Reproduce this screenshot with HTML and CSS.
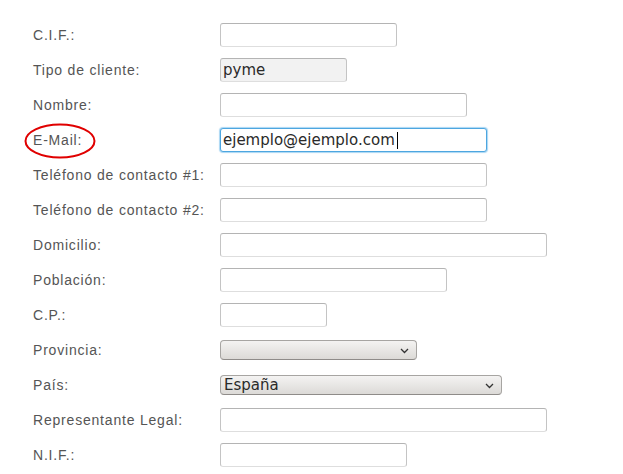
FILE: index.html
```html
<!DOCTYPE html>
<html lang="es">
<head>
    <meta charset="UTF-8">
    <title>Alta de cliente</title>
    <link rel="stylesheet" href="styles.css">
</head>
<body>
    <form class="clientform">
        <label class="lbl" for="cif">C.I.F.:</label>
        <input class="field" id="cif" type="text" style="width: 177px">

        <label class="lbl" for="tipo">Tipo de cliente:</label>
        <input class="field readonly" id="tipo" type="text" value="pyme" readonly style="width: 127px">

        <label class="lbl" for="nombre">Nombre:</label>
        <input class="field" id="nombre" type="text" style="width: 247px">

        <label class="lbl marked" for="email">E-Mail:
            <svg class="mark" width="76" height="38" viewBox="0 0 76 38">
                <ellipse cx="37" cy="19" rx="34.5" ry="16.5" fill="none" stroke="#e00000" stroke-width="2"/>
            </svg>
        </label>
        <span class="caretwrap">
            <input class="field focused" id="email" type="email" value="ejemplo@ejemplo.com" style="width: 267px">
            <span class="caret"></span>
        </span>

        <label class="lbl" for="tel1">Teléfono de contacto #1:</label>
        <input class="field" id="tel1" type="text" style="width: 267px">

        <label class="lbl" for="tel2">Teléfono de contacto #2:</label>
        <input class="field" id="tel2" type="text" style="width: 267px">

        <label class="lbl" for="domicilio">Domicilio:</label>
        <input class="field" id="domicilio" type="text" style="width: 327px">

        <label class="lbl" for="poblacion">Población:</label>
        <input class="field" id="poblacion" type="text" style="width: 227px">

        <label class="lbl" for="cp">C.P.:</label>
        <input class="field" id="cp" type="text" style="width: 107px">

        <label class="lbl" for="provincia">Provincia:</label>
        <span class="selectwrap" style="width: 197px">
            <select class="combo" id="provincia">
                <option value=""></option>
            </select>
            <svg class="chev" width="9" height="6" viewBox="0 0 9 6"><path d="M1 1l3.5 3.5L8 1" fill="none" stroke="#333" stroke-width="1.3"/></svg>
        </span>

        <label class="lbl" for="pais">País:</label>
        <span class="selectwrap" style="width: 282px">
            <select class="combo" id="pais">
                <option value="es">España</option>
            </select>
            <svg class="chev" width="9" height="6" viewBox="0 0 9 6"><path d="M1 1l3.5 3.5L8 1" fill="none" stroke="#333" stroke-width="1.3"/></svg>
        </span>

        <label class="lbl" for="representante">Representante Legal:</label>
        <input class="field" id="representante" type="text" style="width: 327px">

        <label class="lbl" for="nif">N.I.F.:</label>
        <input class="field" id="nif" type="text" style="width: 187px">
    </form>
</body>
</html>
```

FILE: styles.css
```css
body {
    margin: 0;
    background: #fff;
}
.clientform {
    display: grid;
    grid-template-columns: 187px auto;
    grid-auto-rows: 35px;
    align-items: center;
    justify-items: start;
    padding: 17px 0 0 33px;
}
.lbl {
    font-family: "Liberation Sans", Arial, sans-serif;
    font-size: 14px;
    letter-spacing: 0.8px;
    color: #555;
    white-space: nowrap;
}
.marked {
    position: relative;
}
.mark {
    position: absolute;
    left: -10px;
    top: -10px;
}
.field {
    box-sizing: border-box;
    height: 24px;
    margin: 0;
    padding: 0 2px;
    border: 1px solid #c4c4c4;
    border-top-color: #b4b4b4;
    border-bottom-color: #dedede;
    border-radius: 3px;
    background: #fff;
    font-family: "DejaVu Sans", sans-serif;
    font-size: 15px;
    color: #2a2a2a;
    outline: none;
}
.readonly {
    background: #f2f2f2;
}
.focused {
    border: 1px solid #4da6e0;
    box-shadow: 0 0 1px 1px #a9d6f3;
}
.caretwrap {
    position: relative;
    display: inline-block;
    height: 24px;
}
.caret {
    position: absolute;
    left: 177px;
    top: 4px;
    width: 1px;
    height: 17px;
    background: #000;
}
.selectwrap {
    position: relative;
    display: inline-block;
    height: 20px;
}
.combo {
    -webkit-appearance: none;
    appearance: none;
    box-sizing: border-box;
    width: 100%;
    height: 20px;
    margin: 0;
    padding: 0 3px;
    border: 1px solid #a7a5a2;
    border-bottom-color: #8f8c89;
    border-radius: 4px;
    background: linear-gradient(#f4f3f2, #dcdad7);
    font-family: "DejaVu Sans", sans-serif;
    font-size: 15px;
    line-height: 18px;
    color: #2a2a2a;
}
.chev {
    position: absolute;
    right: 8px;
    top: 8px;
    pointer-events: none;
}
```
